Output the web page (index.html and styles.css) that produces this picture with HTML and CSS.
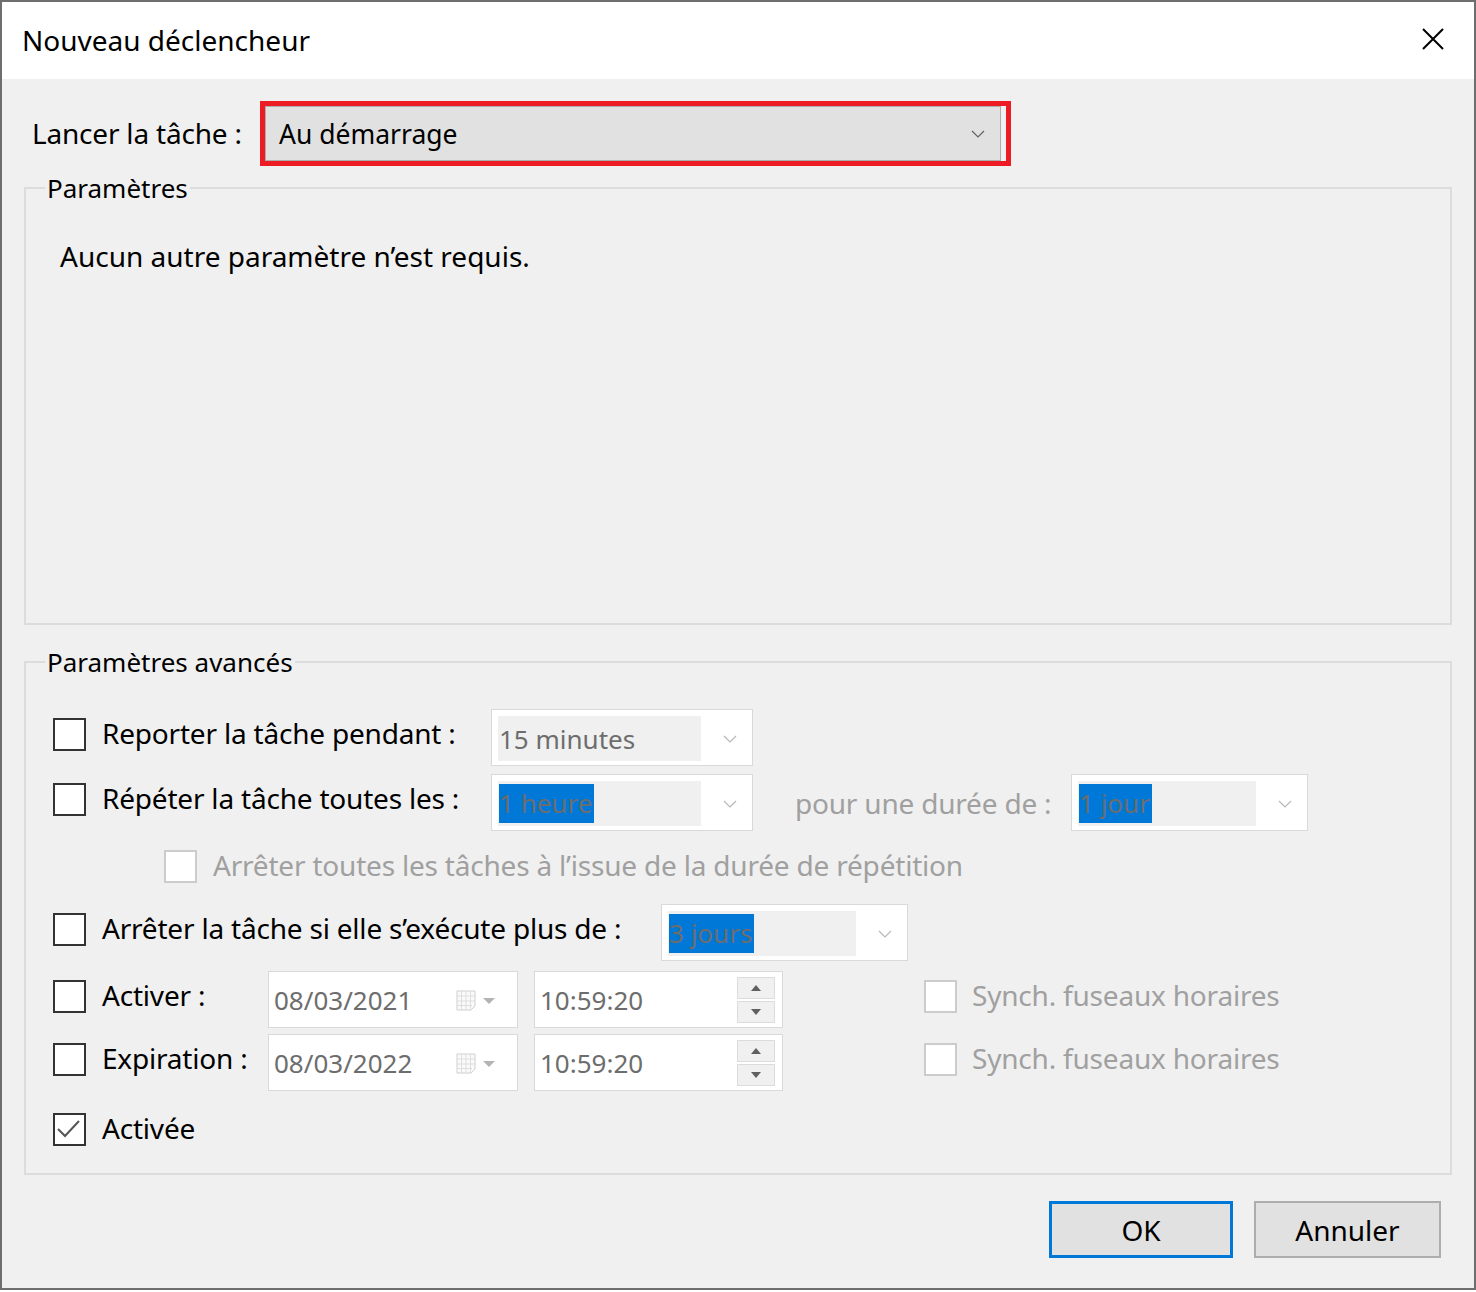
FILE: index.html
```html
<!DOCTYPE html>
<html>
<head>
  <title>Nouveau déclencheur</title>
  <link rel="stylesheet" href="styles.css">
</head>
<body>
  <div class="dialog">
    <div class="titlebar">
      <span class="title">Nouveau déclencheur</span>
      <svg class="close" width="22" height="22" viewBox="0 0 22 22">
        <path d="M1 1 L21 21 M21 1 L1 21" stroke="#000" stroke-width="2" fill="none"/>
      </svg>
    </div>

    <div class="content">
      <div class="launch-row">
        <label class="launch-label">Lancer la tâche :</label>
        <div class="mark">
          <div class="combo-main">
            <span>Au démarrage</span>
            <svg width="14" height="8" viewBox="0 0 14 8"><polyline points="1,1 7,7 13,1" fill="none" stroke="#606060" stroke-width="1.2"/></svg>
          </div>
        </div>
      </div>

      <fieldset class="group">
        <legend>Paramètres</legend>
        <div class="params-body">
          <p>Aucun autre paramètre n’est requis.</p>
        </div>
      </fieldset>

      <fieldset class="group advanced">
        <legend>Paramètres avancés</legend>

        <div class="row r1">
          <div class="chk-wrap lbl-wide">
            <span class="chk"></span>
            <span class="lbl">Reporter la tâche pendant :</span>
          </div>
          <div class="combo w262">
            <div class="field">15 minutes</div>
            <svg class="chev" width="14" height="8" viewBox="0 0 14 8"><polyline points="1,1 7,7 13,1" fill="none" stroke="#b8b8b8" stroke-width="1.2"/></svg>
          </div>
        </div>

        <div class="row r2">
          <div class="chk-wrap lbl-wide">
            <span class="chk"></span>
            <span class="lbl">Répéter la tâche toutes les :</span>
          </div>
          <div class="combo w262">
            <div class="field"><span class="sel">1 heure</span></div>
            <svg class="chev" width="14" height="8" viewBox="0 0 14 8"><polyline points="1,1 7,7 13,1" fill="none" stroke="#b8b8b8" stroke-width="1.2"/></svg>
          </div>
          <span class="muted duration">pour une durée de :</span>
          <div class="combo w237">
            <div class="field"><span class="sel">1 jour</span></div>
            <svg class="chev" width="14" height="8" viewBox="0 0 14 8"><polyline points="1,1 7,7 13,1" fill="none" stroke="#b8b8b8" stroke-width="1.2"/></svg>
          </div>
        </div>

        <div class="row r3">
          <div class="chk-wrap sub">
            <span class="chk off"></span>
            <span class="lbl muted">Arrêter toutes les tâches à l’issue de la durée de répétition</span>
          </div>
        </div>

        <div class="row r4">
          <div class="chk-wrap lbl-long">
            <span class="chk"></span>
            <span class="lbl">Arrêter la tâche si elle s’exécute plus de :</span>
          </div>
          <div class="combo w247">
            <div class="field"><span class="sel">3 jours</span></div>
            <svg class="chev" width="14" height="8" viewBox="0 0 14 8"><polyline points="1,1 7,7 13,1" fill="none" stroke="#b8b8b8" stroke-width="1.2"/></svg>
          </div>
        </div>

        <div class="row r5">
          <div class="chk-wrap lbl-short">
            <span class="chk"></span>
            <span class="lbl">Activer :</span>
          </div>
          <div class="datebox">
            <span class="val">08/03/2021</span>
            <svg class="cal" width="40" height="22" viewBox="0 0 40 22">
              <path d="M1 1 H19 V16 L15 20 H1 Z" fill="#fafafa" stroke="#cfcfcf"/>
              <path d="M1 6 H19 M1 11 H19 M1 15.5 H16 M5.5 1 V20 M10 1 V20 M14.5 1 V20" stroke="#dedede" fill="none"/>
              <polygon points="27,8 39,8 33,14" fill="#b4b4b4"/>
            </svg>
          </div>
          <div class="timebox">
            <span class="val">10:59:20</span>
            <div class="spin">
              <span class="spin-btn"><svg width="10" height="6" viewBox="0 0 10 6"><polygon points="5,0 10,6 0,6" fill="#606060"/></svg></span>
              <span class="spin-btn"><svg width="10" height="6" viewBox="0 0 10 6"><polygon points="0,0 10,0 5,6" fill="#606060"/></svg></span>
            </div>
          </div>
          <div class="chk-wrap sync">
            <span class="chk off"></span>
            <span class="lbl muted">Synch. fuseaux horaires</span>
          </div>
        </div>

        <div class="row r6">
          <div class="chk-wrap lbl-short">
            <span class="chk"></span>
            <span class="lbl">Expiration :</span>
          </div>
          <div class="datebox">
            <span class="val">08/03/2022</span>
            <svg class="cal" width="40" height="22" viewBox="0 0 40 22">
              <path d="M1 1 H19 V16 L15 20 H1 Z" fill="#fafafa" stroke="#cfcfcf"/>
              <path d="M1 6 H19 M1 11 H19 M1 15.5 H16 M5.5 1 V20 M10 1 V20 M14.5 1 V20" stroke="#dedede" fill="none"/>
              <polygon points="27,8 39,8 33,14" fill="#b4b4b4"/>
            </svg>
          </div>
          <div class="timebox">
            <span class="val">10:59:20</span>
            <div class="spin">
              <span class="spin-btn"><svg width="10" height="6" viewBox="0 0 10 6"><polygon points="5,0 10,6 0,6" fill="#606060"/></svg></span>
              <span class="spin-btn"><svg width="10" height="6" viewBox="0 0 10 6"><polygon points="0,0 10,0 5,6" fill="#606060"/></svg></span>
            </div>
          </div>
          <div class="chk-wrap sync">
            <span class="chk off"></span>
            <span class="lbl muted">Synch. fuseaux horaires</span>
          </div>
        </div>

        <div class="row r7">
          <div class="chk-wrap">
            <span class="chk">
              <svg width="29" height="29" viewBox="0 0 29 29"><polyline points="3,14 10,21 24,6" fill="none" stroke="#555" stroke-width="2"/></svg>
            </span>
            <span class="lbl">Activée</span>
          </div>
        </div>
      </fieldset>

      <div class="buttons">
        <button class="btn btn-default">OK</button>
        <button class="btn">Annuler</button>
      </div>
    </div>
  </div>
</body>
</html>
```

FILE: styles.css
```css
body {
  margin: 0;
  background-color: #ffffff;
  font-family: "Noto Sans", "Open Sans", sans-serif;
  font-size: 28px;
  color: #000;
}

.dialog {
  width: 1476px;
  height: 1290px;
  box-sizing: border-box;
  border: 2px solid #6e6e6e;
  background-color: #f0f0f0;
}

.titlebar {
  height: 77px;
  background-color: #fff;
  display: flex;
  align-items: center;
  justify-content: space-between;
  padding: 0 30px 0 20px;
}
.title {
  font-size: 28px;
  margin-top: -2px;
}
.close {
  margin-top: -4px;
}

.content {
  padding: 0 22px;
}

/* top combo with the red frame */
.launch-row {
  display: flex;
  align-items: center;
  padding-top: 22px;
  height: 65px;
}
.launch-label {
  width: 228px;
  margin-left: 8px;
  margin-top: -2px;
  letter-spacing: -0.2px;
}
.mark {
  border: 5px solid #ed1c24;
  padding-right: 5px;
  height: 55px;
  box-sizing: content-box;
}
.combo-main {
  width: 736px;
  height: 55px;
  box-sizing: border-box;
  background-color: #e1e1e1;
  border: 1px solid #adadad;
  display: flex;
  align-items: center;
  justify-content: space-between;
  padding: 0 15px 0 13px;
  font-size: 26.5px;
}

/* group boxes */
.group {
  margin: 4px 0 0 0;
  padding: 0;
  border: 2px solid #dcdcdc;
}
.group legend {
  margin-left: 19px;
  padding: 0 2px;
  line-height: 36px;
  font-size: 26px;
}
.params-body {
  height: 417px;
}
.params-body p {
  margin: 0;
  padding: 32px 0 0 34px;
  line-height: 36px;
}

.advanced {
  margin-top: 19px;
  padding-bottom: 15px;
}

.row {
  display: flex;
  align-items: center;
  height: 57px;
  padding-left: 27px;
}
.r1 { margin-top: 29px; }
.r2 { margin-top: 8px; }
.r3 { margin-top: 7px; }
.r4 { margin-top: 9px; }
.r5 { margin-top: 10px; }
.r6 { margin-top: 6px; }
.r7 { margin-top: 10px; }

.chk-wrap {
  display: flex;
  align-items: center;
  gap: 16px;
  margin-bottom: 6px;
}
.r3 .chk-wrap, .r7 .chk-wrap {
  margin-bottom: 0;
}
.lbl-wide { width: 438px; }
.lbl-long { width: 608px; }
.lbl-short { width: 215px; }
.sub { margin-left: 111px; }

.chk {
  width: 33px;
  height: 33px;
  flex-shrink: 0;
  box-sizing: border-box;
  border: 2px solid #333;
  background-color: #fff;
  display: flex;
  align-items: center;
  justify-content: center;
}
.chk.off {
  border-color: #cccccc;
}

.lbl {
  line-height: 36px;
  white-space: nowrap;
  margin-top: -3px;
  letter-spacing: -0.2px;
}
.muted {
  color: #a0a0a0;
}

/* disabled drop-down lists */
.combo {
  height: 57px;
  box-sizing: border-box;
  border: 1px solid #d9d9d9;
  background-color: #fff;
  display: flex;
  align-items: center;
  padding: 6px 15px 4px 6px;
  font-size: 26px;
}
.w262 { width: 262px; }
.w237 { width: 237px; }
.w247 { width: 247px; }
.field {
  flex: 1;
  align-self: stretch;
  background-color: #f0f0f0;
  color: #6d6d6d;
  display: flex;
  align-items: center;
  padding-left: 1px;
  margin-right: 22px;
  white-space: nowrap;
}
.sel {
  background-color: #0078d7;
  line-height: 39px;
  padding-right: 2px;
}
.duration {
  margin-left: 42px;
  width: 276px;
  white-space: nowrap;
  letter-spacing: -0.2px;
}

/* date and time pickers */
.datebox, .timebox {
  height: 57px;
  box-sizing: border-box;
  border: 1px solid #d9d9d9;
  background-color: #fff;
  display: flex;
  align-items: center;
  justify-content: space-between;
  color: #6d6d6d;
  font-size: 26px;
}
.datebox {
  width: 250px;
  padding: 0 21px 0 5px;
}
.cal {
  margin-top: 2px;
}
.timebox {
  width: 249px;
  margin-left: 16px;
  padding: 0 7px 0 5px;
}
.spin {
  display: flex;
  flex-direction: column;
  gap: 2px;
}
.spin-btn {
  width: 38px;
  height: 22px;
  box-sizing: border-box;
  border: 1px solid #dcdcdc;
  background-color: #f0f0f0;
  display: flex;
  align-items: center;
  justify-content: center;
}
.sync {
  margin-left: 141px;
  gap: 15px;
}

/* dialog buttons */
.buttons {
  display: flex;
  justify-content: flex-end;
  gap: 21px;
  margin-top: 26px;
  padding-right: 11px;
}
.btn {
  height: 57px;
  background-color: #e1e1e1;
  border: 2px solid #adadad;
  font-family: "Noto Sans", "Open Sans", sans-serif;
  font-size: 28px;
  color: #000;
  padding: 0;
}
.btn-default {
  width: 184px;
  border: 3px solid #0078d7;
}
.btn + .btn {
  width: 187px;
}
```
